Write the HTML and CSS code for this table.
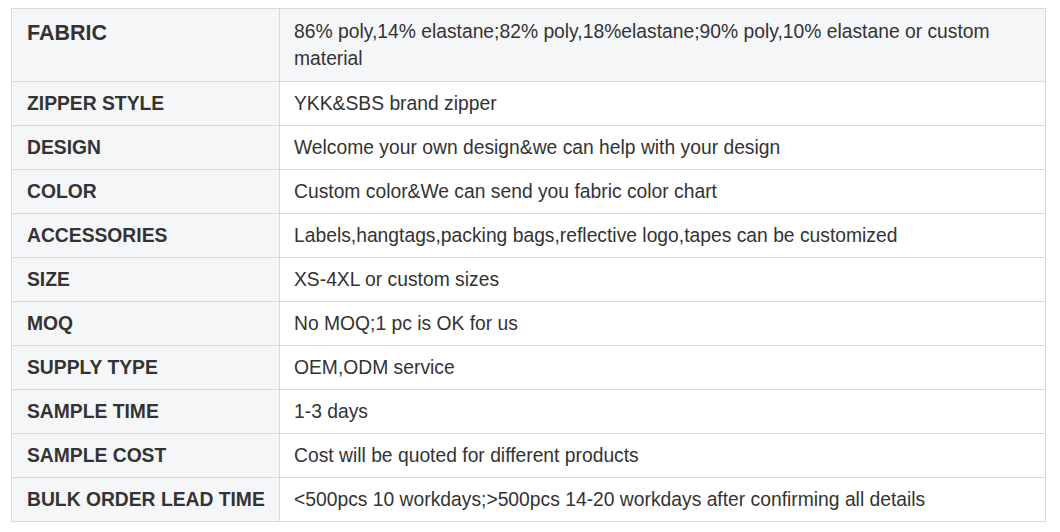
FILE: index.html
```html
<!DOCTYPE html>
<html>
<head>
<meta charset="utf-8">
<link rel="stylesheet" href="styles.css">
</head>
<body>
<table class="spec">
  <tr class="head">
    <th class="label">FABRIC</th>
    <th class="value">86% poly,14% elastane;82% poly,18%elastane;90% poly,10% elastane or custom material</th>
  </tr>
  <tr><td class="label">ZIPPER STYLE</td><td class="value">YKK&amp;SBS brand zipper</td></tr>
  <tr><td class="label">DESIGN</td><td class="value">Welcome your own design&amp;we can help with your design</td></tr>
  <tr><td class="label">COLOR</td><td class="value">Custom color&amp;We can send you fabric color chart</td></tr>
  <tr><td class="label">ACCESSORIES</td><td class="value">Labels,hangtags,packing bags,reflective logo,tapes can be customized</td></tr>
  <tr><td class="label">SIZE</td><td class="value">XS-4XL or custom sizes</td></tr>
  <tr><td class="label">MOQ</td><td class="value">No MOQ;1 pc is OK for us</td></tr>
  <tr><td class="label">SUPPLY TYPE</td><td class="value">OEM,ODM service</td></tr>
  <tr><td class="label">SAMPLE TIME</td><td class="value">1-3 days</td></tr>
  <tr><td class="label">SAMPLE COST</td><td class="value">Cost will be quoted for different products</td></tr>
  <tr><td class="label">BULK ORDER LEAD TIME</td><td class="value">&lt;500pcs 10 workdays;&gt;500pcs 14-20 workdays after confirming all details</td></tr>
</table>
</body>
</html>
```

FILE: styles.css
```css
html, body {
  margin: 0;
  padding: 0;
  background: #ffffff;
}

body {
  padding: 8px 0 0 11px;
  font-family: "Liberation Sans", Arial, sans-serif;
  color: #333333;
}

.spec {
  border-collapse: collapse;
  width: 1035px;
  table-layout: fixed;
}

.spec th,
.spec td {
  border: 1px solid #d9d9d9;
  text-align: left;
  vertical-align: top;
  padding: 8px 13px 8px 14px;
  line-height: 27px;
  font-size: 19.3px;
  height: 27px;
}

.spec .label {
  width: 239px;
  background: #f5f6f8;
  font-weight: bold;
  color: #333333;
  padding-left: 15px;
}

.spec .value {
  font-weight: normal;
  background: #ffffff;
}

.spec .head th {
  padding-top: 9px;
  padding-bottom: 9px;
  background: #f5f6f8;
}

.spec .head th.label {
  font-size: 21.5px;
  padding-top: 11px;
  padding-bottom: 7px;
}
```
